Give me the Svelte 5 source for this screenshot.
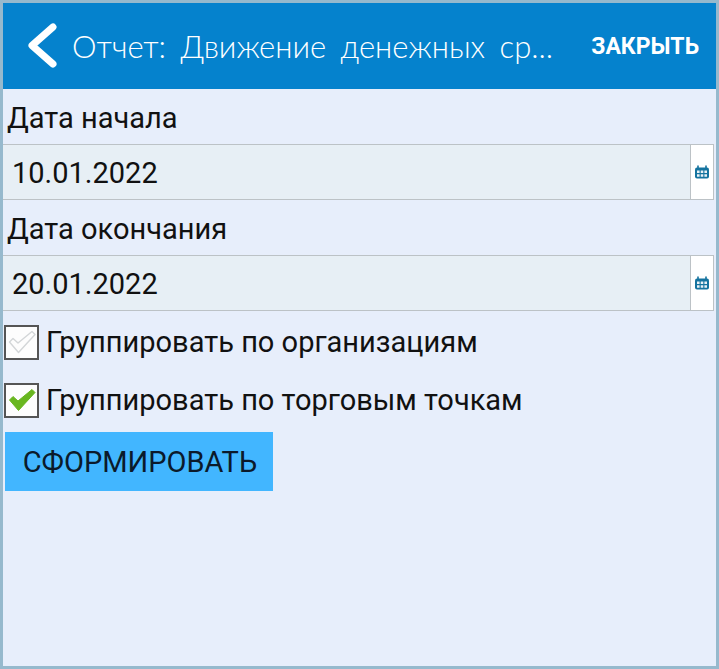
<script>
  let fields = [
    { label: 'Дата начала', value: '10.01.2022' },
    { label: 'Дата окончания', value: '20.01.2022' }
  ]
  const tick = 'M2.5 15 L6 11.5 L11 16 L25 4.5 L28 7.5 L11.5 25.5 Z'
</script>

<div class="screen">
  <header class="topbar">
    <svg class="back" width="34" height="46" viewBox="0 0 34 46" aria-hidden="true">
      <path d="M29 4 L8 22.5 L29 41" fill="none" stroke="#fff" stroke-width="7" stroke-linecap="round" stroke-linejoin="round" />
    </svg>
    <h1 class="title">Отчет: Движение денежных ср...</h1>
    <span class="close">ЗАКРЫТЬ</span>
  </header>

  <main class="form">
    {#each fields as field}
      <div class="label">{field.label}</div>
      <div class="date">
        <span class="value">{field.value}</span>
        <span class="picker">
          <svg width="16" height="14" viewBox="0 0 16 14" aria-hidden="true">
            <path d="M1 4.5 Q1 2.5 3 2.5 L13 2.5 Q15 2.5 15 4.5 L15 11.5 Q15 13.5 13 13.5 L3 13.5 Q1 13.5 1 11.5 Z" fill="#14739f" />
            <path d="M4 0.5V3M12 0.5V3" stroke="#14739f" stroke-width="1.6" />
            <path d="M3 5.5h2.6v2.6H3zM6.7 5.5h2.6v2.6H6.7zM10.4 5.5H13v2.6h-2.6zM3 9.2h2.6v2.6H3zM6.7 9.2h2.6v2.6H6.7zM10.4 9.2H13v2.6h-2.6z" fill="#e8f1f6" />
          </svg>
        </span>
      </div>
    {/each}

    <div class="check first">
      <span class="box">
        <svg width="30" height="30" viewBox="0 0 30 30" aria-hidden="true">
          <path d={tick} fill="#fdfdfd" stroke="#d3d6d8" stroke-width="1.4" stroke-linejoin="round" />
        </svg>
      </span>
      <span>Группировать по организациям</span>
    </div>
    <div class="check second">
      <span class="box">
        <svg width="30" height="30" viewBox="0 0 30 30" aria-hidden="true">
          <path d={tick} fill="#68b61f" stroke="#68b61f" stroke-width="1" stroke-linejoin="round" />
        </svg>
      </span>
      <span>Группировать по торговым точкам</span>
    </div>

    <button class="submit" type="button">СФОРМИРОВАТЬ</button>
  </main>
</div>

<style>
  :global(body) {
    margin: 0;
  }

  .screen {
    box-sizing: border-box;
    width: 719px;
    height: 669px;
    border: 3px solid #96b9cd;
    background: #e7eefb;
    font-family: Roboto, "Liberation Sans", sans-serif;
    color: #111;
    display: flex;
    flex-direction: column;
  }

  /* top bar */
  .topbar {
    height: 86px;
    flex-shrink: 0;
    background: #0582cd;
    color: #fff;
    display: flex;
    align-items: center;
    padding: 0 17px 0 21px;
  }

  .back {
    flex-shrink: 0;
    margin-right: 14px;
  }

  .title {
    flex: 1;
    margin: 0;
    font-family: Lato, "Open Sans", sans-serif;
    font-size: 31px;
    font-weight: 300;
    word-spacing: 6px;
    white-space: nowrap;
  }

  .close {
    font-size: 23px;
    font-weight: 700;
  }

  /* form */
  .form {
    display: flex;
    flex-direction: column;
    align-items: flex-start;
  }

  .label {
    font-size: 29px;
    line-height: 35px;
    height: 33px;
    margin: 12px 0 0 4px;
  }

  .label + .date {
    margin-top: 10px;
  }

  .date {
    box-sizing: border-box;
    width: 711px;
    height: 56px;
    border-top: 1px solid #bcc2c6;
    border-bottom: 1px solid #bcc2c6;
    background: #e7eff5;
    display: flex;
    align-items: center;
  }

  .value {
    flex: 1;
    padding: 2px 0 0 9px;
    font-size: 29px;
  }

  .picker {
    box-sizing: border-box;
    width: 24px;
    height: 100%;
    border-left: 1px solid #bcc2c6;
    border-right: 1px solid #bcc2c6;
    background: #fff;
    display: flex;
    align-items: center;
    justify-content: center;
  }

  .check {
    display: flex;
    align-items: center;
    gap: 7px;
    margin-left: 1px;
    font-size: 29px;
    height: 36px;
  }

  .check.first {
    margin-top: 13px;
  }

  .check.second {
    margin-top: 22px;
  }

  .box {
    box-sizing: border-box;
    width: 35px;
    height: 35px;
    border: 2px solid #555;
    background: #fdfdfd;
    display: flex;
    align-items: center;
    justify-content: center;
  }

  .submit {
    margin: 14px 0 0 2px;
    width: 268px;
    height: 59px;
    border: 0;
    padding: 0 0 0 2px;
    background: #42b6ff;
    color: #0b1a2b;
    font-family: inherit;
    font-size: 29px;
  }
</style>
